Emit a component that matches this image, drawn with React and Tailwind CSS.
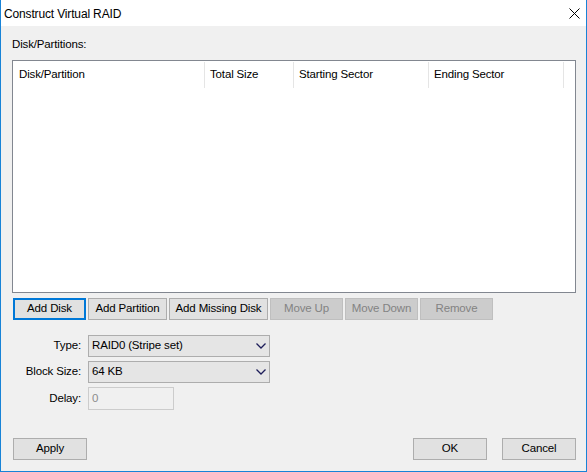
import React from 'react';

const font = { fontFamily: '"Segoe UI", "Liberation Sans", Arial, sans-serif', letterSpacing: '-0.15px' };

const Btn = ({ children, w, disabled, focus }) => (
  <button
    className={
      'h-[22px] shrink-0 text-[11.5px] leading-none ' +
      (disabled
        ? 'bg-[#cccccc] border border-[#bfbfbf] text-[#838383]'
        : focus
        ? 'bg-[#e1e1e1] border-2 border-[#0078d7] text-black'
        : 'bg-[#e1e1e1] border border-[#adadad] text-black')
    }
    style={{ width: w }}
  >
    {children}
  </button>
);

const Chevron = () => (
  <svg width="10" height="6" viewBox="0 0 10 6" className="text-[#1e1e5a]">
    <path d="M0.5 0.5 L5 5 L9.5 0.5" fill="none" stroke="currentColor" strokeWidth="1.3" />
  </svg>
);

const Select = ({ value }) => (
  <div className="h-[22px] w-[182px] bg-[#e5e5e5] border border-[#adadad] flex items-center justify-between pl-[3px] pr-[3px]">
    <span className="text-[11.5px] text-black">{value}</span>
    <Chevron />
  </div>
);

export default function App() {
  return (
    <div className="w-[587px] h-[472px] flex flex-col border-l border-r border-b border-[#1883d7] bg-[#f0f0f0]" style={font}>
      {/* Title bar */}
      <div className="h-[26px] bg-white flex items-center justify-between pl-[3px] pr-[6px] pt-[1px] shrink-0">
        <span className="text-[12px] text-black">Construct Virtual RAID</span>
        <svg width="11" height="11" viewBox="0 0 11 11">
          <path d="M0.5 0.5 L10.5 10.5 M10.5 0.5 L0.5 10.5" stroke="#000" strokeWidth="1" />
        </svg>
      </div>

      <div className="flex-1 flex flex-col pl-[11px] pr-[10px] pt-[10px] pb-[11px] text-[11.5px]">
        <div className="leading-[16px] text-black">Disk/Partitions:</div>

        {/* List view */}
        <div className="mt-[8px] h-[233px] w-[564px] bg-white border border-[#828790]">
          <div className="h-[27px] pt-[1px] flex text-black">
            <div className="w-[192px] pl-[6px] flex items-center border-r border-[#e5e5e5]">Disk/Partition</div>
            <div className="w-[89px] pl-[5px] flex items-center border-r border-[#e5e5e5]">Total Size</div>
            <div className="w-[135px] pl-[5px] flex items-center border-r border-[#e5e5e5]">Starting Sector</div>
            <div className="w-[135px] pl-[5px] flex items-center border-r border-[#e5e5e5]">Ending Sector</div>
          </div>
        </div>

        {/* Buttons */}
        <div className="mt-[5px] flex gap-[2px] pl-[1px]">
          <Btn w={73} focus>Add Disk</Btn>
          <Btn w={79}>Add Partition</Btn>
          <Btn w={99}>Add Missing Disk</Btn>
          <Btn w={73} disabled>Move Up</Btn>
          <Btn w={73} disabled>Move Down</Btn>
          <Btn w={73} disabled>Remove</Btn>
        </div>

        {/* Options */}
        <div className="mt-[15px] flex flex-col gap-[4px]">
          <div className="flex items-center">
            <span className="w-[69px] text-right text-black">Type:</span>
            <div className="ml-[7px]"><Select value="RAID0 (Stripe set)" /></div>
          </div>
          <div className="flex items-center">
            <span className="w-[69px] text-right text-black">Block Size:</span>
            <div className="ml-[7px]"><Select value="64 KB" /></div>
          </div>
          <div className="flex items-center">
            <span className="w-[69px] text-right text-black">Delay:</span>
            <div className="ml-[7px] h-[23px] w-[86px] bg-[#f0f0f0] border border-[#cccccc] flex items-center pl-[3px]">
              <span className="text-[#8c8c8c]">0</span>
            </div>
          </div>
        </div>

        {/* Bottom buttons */}
        <div className="mt-auto flex items-center pl-[1px]">
          <Btn w={74}>Apply</Btn>
          <div className="flex-1" />
          <Btn w={74}>OK</Btn>
          <div className="w-[15px]" />
          <Btn w={74}>Cancel</Btn>
        </div>
      </div>
    </div>
  );
}
